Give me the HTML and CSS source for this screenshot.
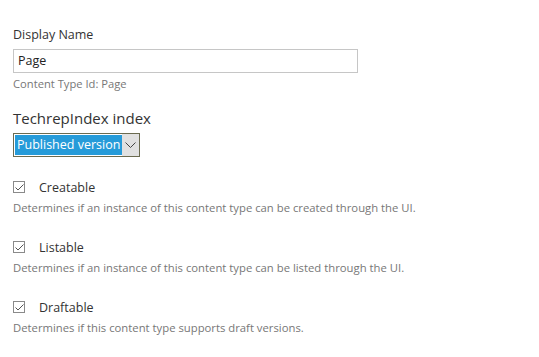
FILE: index.html
```html
<!DOCTYPE html>
<html>
<head>
<meta charset="utf-8">
<link rel="stylesheet" href="styles.css">
</head>
<body>
<div class="form">
  <div class="field">
    <div class="label">Display Name</div>
    <div class="input">Page</div>
    <div class="hint">Content Type Id: Page</div>
  </div>
  <div class="field index">
    <div class="heading">TechrepIndex index</div>
    <div class="select">
      <span class="selected">Published version</span>
      <span class="arrow"><svg width="11" height="7" viewBox="0 0 11 7"><path d="M0.5 0.5 L5.5 5.5 L10.5 0.5" fill="none" stroke="#444" stroke-width="1"/></svg></span>
    </div>
  </div>
  <div class="check">
    <div class="check-row"><span class="box"><svg width="9" height="7" viewBox="0 0 9 7"><path d="M0.5 3.5 L3 6 L8.5 0.5" fill="none" stroke="#555" stroke-width="1"/></svg></span><span class="check-label">Creatable</span></div>
    <div class="desc">Determines if an instance of this content type can be created through the UI.</div>
  </div>
  <div class="check">
    <div class="check-row"><span class="box"><svg width="9" height="7" viewBox="0 0 9 7"><path d="M0.5 3.5 L3 6 L8.5 0.5" fill="none" stroke="#555" stroke-width="1"/></svg></span><span class="check-label">Listable</span></div>
    <div class="desc">Determines if an instance of this content type can be listed through the UI.</div>
  </div>
  <div class="check">
    <div class="check-row"><span class="box"><svg width="9" height="7" viewBox="0 0 9 7"><path d="M0.5 3.5 L3 6 L8.5 0.5" fill="none" stroke="#555" stroke-width="1"/></svg></span><span class="check-label">Draftable</span></div>
    <div class="desc">Determines if this content type supports draft versions.</div>
  </div>
</div>
</body>
</html>
```
FILE: styles.css
```css
html, body {
  margin: 0;
  padding: 0;
  background: #fff;
}
body {
  font-family: "Open Sans", "Noto Sans", sans-serif;
  color: #333;
}
.form {
  padding: 26px 13px 0 13px;
  display: flex;
  flex-direction: column;
}
.label {
  font-size: 12.5px;
  line-height: 18px;
  color: #333;
}
.input {
  margin-top: 5px;
  width: 335px;
  height: 22px;
  border: 1px solid #c6c6c6;
  padding: 0 4px;
  font-size: 12.5px;
  line-height: 22px;
  color: #222;
}
.hint {
  margin-top: 3px;
  font-size: 11.2px;
  line-height: 15px;
  color: #777;
}
.index {
  margin-top: 16px;
}
.heading {
  font-size: 15px;
  line-height: 22px;
  color: #333;
}
.select {
  margin-top: 4px;
  display: inline-flex;
  align-items: stretch;
  width: 125px;
  height: 22px;
  border: 1px solid #6b6b50;
  padding: 0;
  box-sizing: content-box;
}
.selected {
  margin: 1px 0 1px 1px;
  background: #269bd9;
  color: #fff;
  font-size: 12.5px;
  line-height: 20px;
  padding: 0 2px;
  white-space: nowrap;
}
.arrow {
  margin-left: auto;
  width: 19px;
  background: #e1e1e1;
  display: flex;
  align-items: center;
  justify-content: center;
}
.check {
  margin-top: 21px;
}
.check + .check {
  margin-top: 23px;
}
.check-row {
  display: flex;
  align-items: center;
  height: 18px;
}
.box {
  width: 10px;
  height: 10px;
  border: 1px solid #8a8a8a;
  display: flex;
  align-items: center;
  justify-content: center;
}
.check-label {
  margin-left: 14px;
  font-size: 12.5px;
  color: #333;
}
.desc {
  margin-top: 4px;
  font-size: 11.3px;
  line-height: 15px;
  color: #777;
}
```
